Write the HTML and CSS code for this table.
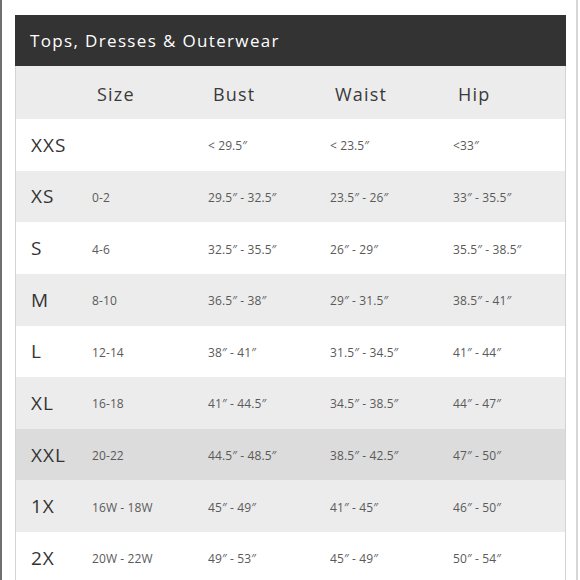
FILE: index.html
```html
<!DOCTYPE html>
<html>
<head>
<meta charset="utf-8">
<link rel="stylesheet" href="styles.css">
</head>
<body>
<div class="page">
  <div class="chart">
    <div class="title">Tops, Dresses &amp; Outerwear</div>
    <div class="head">
      <span></span><span>Size</span><span>Bust</span><span>Waist</span><span>Hip</span>
    </div>
    <div class="row"><span class="lbl">XXS</span><span></span><span>&lt; 29.5″</span><span>&lt; 23.5″</span><span>&lt;33″</span></div>
    <div class="row alt"><span class="lbl">XS</span><span>0-2</span><span>29.5″ - 32.5″</span><span>23.5″ - 26″</span><span>33″ - 35.5″</span></div>
    <div class="row"><span class="lbl">S</span><span>4-6</span><span>32.5″ - 35.5″</span><span>26″ - 29″</span><span>35.5″ - 38.5″</span></div>
    <div class="row alt"><span class="lbl">M</span><span>8-10</span><span>36.5″ - 38″</span><span>29″ - 31.5″</span><span>38.5″ - 41″</span></div>
    <div class="row"><span class="lbl">L</span><span>12-14</span><span>38″ - 41″</span><span>31.5″ - 34.5″</span><span>41″ - 44″</span></div>
    <div class="row alt"><span class="lbl">XL</span><span>16-18</span><span>41″ - 44.5″</span><span>34.5″ - 38.5″</span><span>44″ - 47″</span></div>
    <div class="row dark"><span class="lbl">XXL</span><span>20-22</span><span>44.5″ - 48.5″</span><span>38.5″ - 42.5″</span><span>47″ - 50″</span></div>
    <div class="row alt"><span class="lbl">1X</span><span>16W - 18W</span><span>45″ - 49″</span><span>41″ - 45″</span><span>46″ - 50″</span></div>
    <div class="row"><span class="lbl">2X</span><span>20W - 22W</span><span>49″ - 53″</span><span>45″ - 49″</span><span>50″ - 54″</span></div>
  </div>
</div>
</body>
</html>
```
FILE: styles.css
```css
html, body {
  margin: 0;
  padding: 0;
  background: #fff;
}
body {
  font-family: "Open Sans", "DejaVu Sans", sans-serif;
  overflow: hidden;
}
.page {
  width: 578px;
  height: 580px;
  box-sizing: border-box;
  border-left: 2px solid #6f6f6f;
  border-right: 2px solid #d6d6d6;
  padding: 15px 0 0 13px;
}
.chart {
  width: 551px;
  box-sizing: border-box;
  border-left: 1px solid #d4d4d4;
  border-right: 1px solid #d4d4d4;
}
.title {
  height: 51px;
  background: #333333;
  color: #fff;
  font-size: 17px;
  letter-spacing: 1.35px;
  display: flex;
  align-items: center;
  padding-left: 15px;
  margin: 0 -1px;
}
.head {
  height: 53px;
  box-sizing: border-box;
  padding-top: 2px;
  background: #ececec;
  display: grid;
  grid-template-columns: 81px 116px 122px 123px 1fr;
  align-items: center;
  color: #3a3a3a;
  font-size: 18px;
  letter-spacing: 1.2px;
}
.row {
  height: 51.625px;
  background: #fff;
  display: grid;
  grid-template-columns: 76px 116px 122px 123px 1fr;
  align-items: center;
  color: #5a5a5a;
  font-size: 12px;
  letter-spacing: 0.1px;
}
.row.alt { background: #ececec; }
.row.dark { background: #dcdcdc; }
.row .lbl {
  padding-left: 15px;
  font-size: 19px;
  color: #333;
  letter-spacing: 1px;
  margin-top: -2px;
}
.row span { padding-top: 2px; }
```
